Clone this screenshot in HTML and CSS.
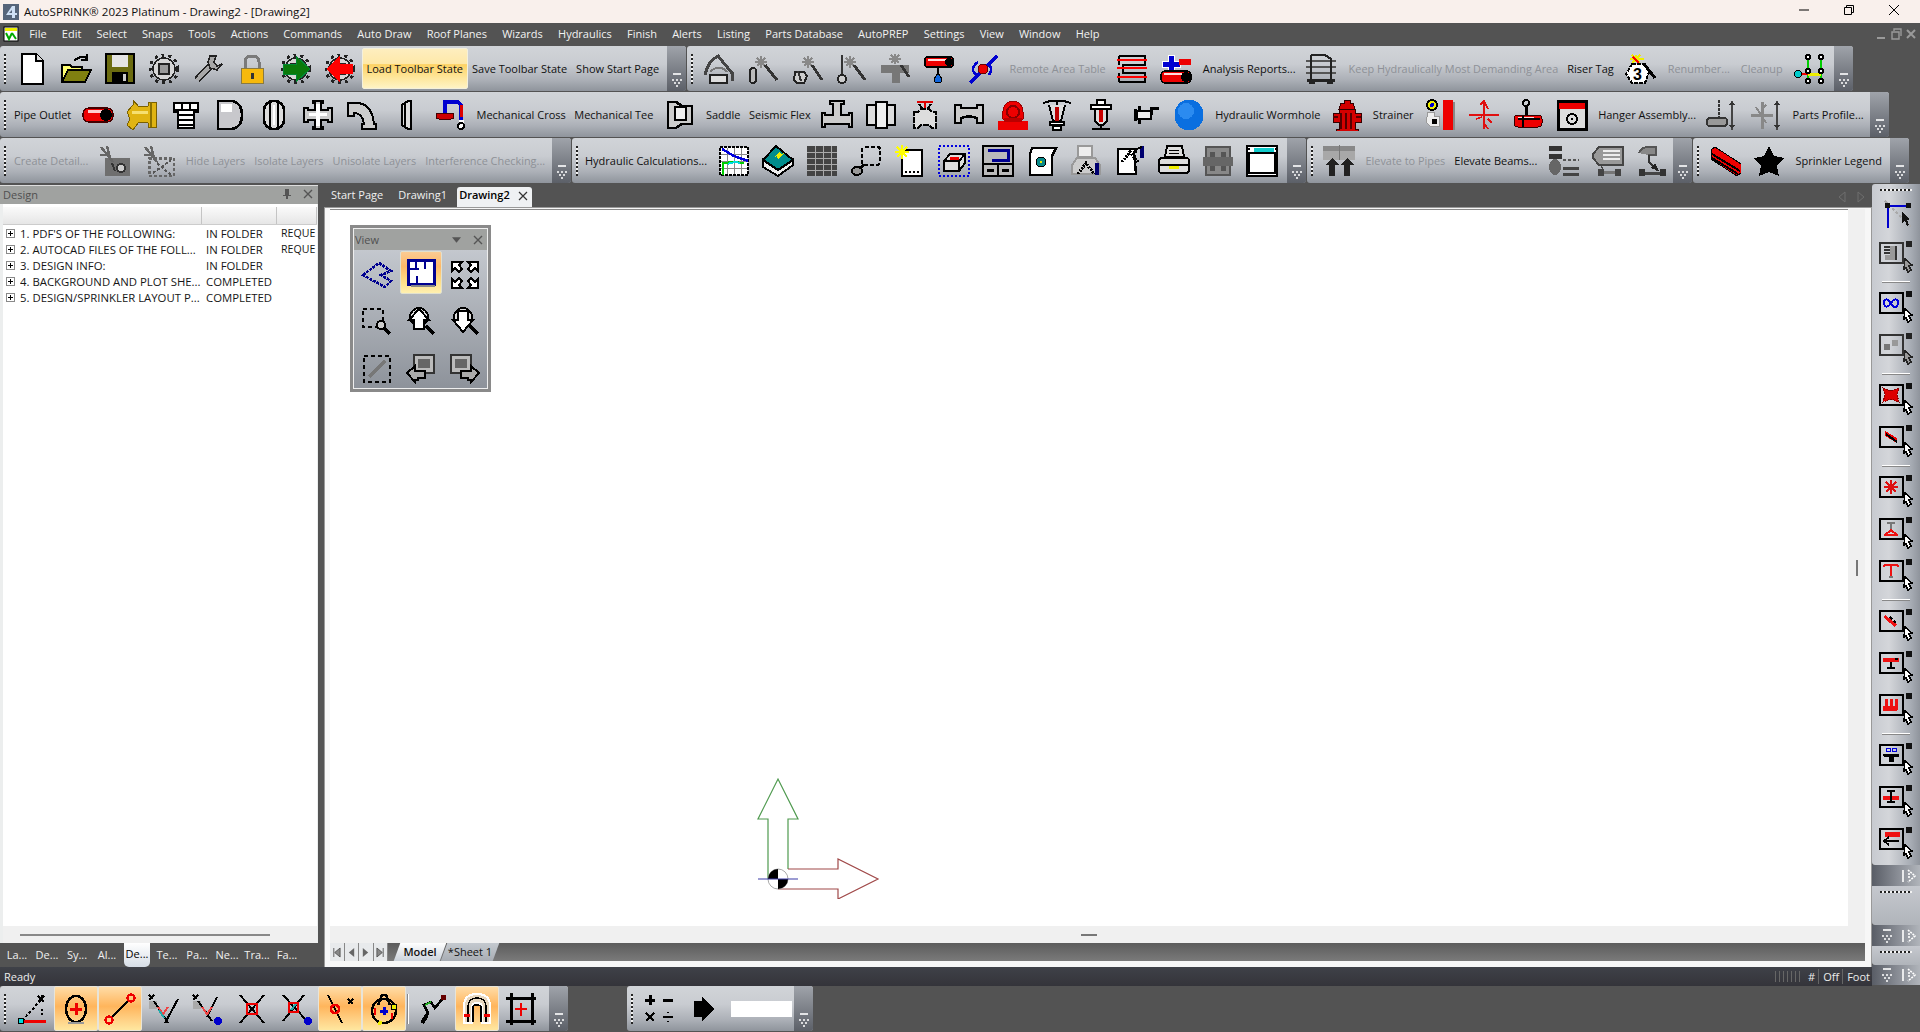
FILE: index.html
```html
<!DOCTYPE html>
<html lang="en">
<head>
<meta charset="utf-8">
<title>AutoSPRINK 2023 Platinum</title>
<link rel="stylesheet" href="styles.css">
</head>
<body>
<svg class="defs" aria-hidden="true">
<defs>
<symbol id="new" viewBox="0 0 32 32"><path d="M6 1h14l7 7v23H6z" fill="#fff" stroke="#000" stroke-width="2"/><path d="M20 1v7h7" fill="#ddd" stroke="#000" stroke-width="2"/></symbol>
<symbol id="open" viewBox="0 0 32 32"><path d="M2 28V12h8l2 2h10v14z" fill="#ffff70" stroke="#000" stroke-width="2"/><path d="M2 29l6-12h23l-6 12z" fill="#808010" stroke="#000" stroke-width="2"/><path d="M14 8q6-6 13-3M27 1v6h-6" fill="none" stroke="#000" stroke-width="2"/></symbol>
<symbol id="save" viewBox="0 0 32 32"><rect x="2" y="1" width="28" height="29" fill="#6c6c10" stroke="#000" stroke-width="2"/><rect x="8" y="2" width="16" height="12" fill="#e4e4e4"/><rect x="8" y="19" width="16" height="11" fill="#000"/><rect x="19" y="21" width="3" height="7" fill="#ccc"/></symbol>
<symbol id="gear" viewBox="0 0 32 32"><circle cx="16" cy="16" r="14" fill="none" stroke="#222" stroke-width="3" stroke-dasharray="3 4"/><circle cx="16" cy="16" r="11" fill="#d6d6d6" stroke="#222" stroke-width="1.5"/><rect x="11" y="11" width="10" height="10" fill="#9a9a9a" stroke="#222" stroke-width="2"/></symbol>
<symbol id="wrench" viewBox="0 0 32 32"><path d="M5 27L19 12" stroke="#222" stroke-width="7"/><path d="M5 27L19 12" stroke="#a8a8a8" stroke-width="4"/><path d="M18 3l-2 6 2 6 7 2 5-6-5 2-3-4 2-6z" fill="#a8a8a8" stroke="#222" stroke-width="1.5"/></symbol>
<symbol id="lock" viewBox="0 0 32 32"><path d="M9 16V9q0-6 7-6t7 6v7" fill="none" stroke="#7a7a7a" stroke-width="3"/><rect x="5" y="15" width="22" height="15" fill="#f7b90c" stroke="#8a7a40"/><rect x="15" y="20" width="3" height="6" fill="#333"/></symbol>
<symbol id="gg" viewBox="0 0 32 32"><use href="#gear" width="32" height="32"/><path d="M3 11h13V3l14 13-14 13v-8H3z" fill="#0a7a0a" stroke="#083" stroke-width="1"/></symbol>
<symbol id="gr" viewBox="0 0 32 32"><use href="#gear" width="32" height="32"/><path d="M29 11H16V3L2 16l14 13v-8h13z" fill="#f00"/></symbol>
<symbol id="hood" viewBox="0 0 32 32"><path d="M2 22Q5 8 15 3l14 17v8" fill="none" stroke="#444" stroke-width="3"/><path d="M7 19q9-9 17 0" fill="none" stroke="#777" stroke-width="2"/><rect x="7" y="22" width="17" height="8" fill="#ddd" stroke="#222" stroke-width="2.5"/></symbol>
<symbol id="sp1" viewBox="0 0 32 32"><path d="M14 3v12M8 9h12M10 5l8 8M18 5l-8 8" stroke="#888" stroke-width="2"/><path d="M18 12l12 15" stroke="#333" stroke-width="3"/><rect x="3" y="15" width="6" height="15" rx="3" fill="#bbb" stroke="#222" stroke-width="2"/></symbol>
<symbol id="sp2" viewBox="0 0 32 32"><path d="M17 3v12M11 9h12M13 5l8 8M21 5l-8 8" stroke="#888" stroke-width="2"/><path d="M21 12l10 15" stroke="#333" stroke-width="3"/><path d="M4 19h9l3 4-3 7H6l-3-3z" fill="#ccc" stroke="#222" stroke-width="2"/><path d="M7 18l3 10" stroke="#333" stroke-width="2"/></symbol>
<symbol id="sp3" viewBox="0 0 32 32"><path d="M15 3v12M9 9h12M11 5l8 8M19 5l-8 8" stroke="#888" stroke-width="2"/><path d="M19 12l11 15" stroke="#333" stroke-width="3"/><path d="M7 2v20" stroke="#333" stroke-width="2"/><circle cx="7" cy="26" r="4" fill="#ccc" stroke="#222" stroke-width="2"/></symbol>
<symbol id="sp4" viewBox="0 0 32 32"><path d="M16 1v10M10 6h12M12 2l8 8M20 2l-8 8" stroke="#888" stroke-width="2"/><path d="M2 12h28v8H21v10h-8V20H2z" fill="#777"/><path d="M22 12l8 12" stroke="#333" stroke-width="3"/></symbol>
<symbol id="rdrop" viewBox="0 0 32 32"><rect x="2" y="4" width="28" height="10" rx="3" fill="#e00" stroke="#000" stroke-width="1.5"/><rect x="5" y="6" width="20" height="2" fill="#fdd"/><circle cx="26" cy="9" r="4" fill="#000"/><path d="M15 15v6" stroke="#000" stroke-width="2"/><path d="M15 20l4 6a4 4 0 1 1-8 0z" fill="#1166dd" stroke="#000"/></symbol>
<symbol id="bluel" viewBox="0 0 32 32"><path d="M3 30L30 3" stroke="#0000d0" stroke-width="3"/><path d="M11 9a10 10 0 0 0-5 9l4 5M23 12a10 10 0 0 1-1 10" fill="none" stroke="#0000d0" stroke-width="2.5"/><circle cx="16" cy="16" r="5" fill="#e00" stroke="#600"/></symbol>
<symbol id="ztab" viewBox="0 0 32 32"><path d="M3 3h26v9H7v8h22v9H3" fill="none" stroke="#000" stroke-width="2"/><path d="M3 3v9M3 20v9" stroke="#000" stroke-width="2"/><path d="M1 7h30M1 15h30M1 24h30" stroke="#f00" stroke-width="2"/></symbol>
<symbol id="plusp" viewBox="0 0 32 32"><path d="M8 2h6v6h6v6h-6v5H8v-5H2V8h6z" fill="#0000d0" stroke="#fff"/><rect x="19" y="6" width="12" height="6" fill="#e00"/><rect x="1" y="18" width="30" height="12" rx="4" fill="#e00" stroke="#000" stroke-width="1.5"/><rect x="4" y="20" width="18" height="2" fill="#fdd"/><circle cx="26" cy="24" r="5" fill="#000"/></symbol>
<symbol id="rack" viewBox="0 0 32 32"><path d="M0 8h30M0 14h30M0 20h30" stroke="#555" stroke-width="2"/><path d="M5 2h14l6 4v22M5 2v26" fill="none" stroke="#222" stroke-width="2"/><path d="M1 27h28" stroke="#222" stroke-width="3"/><rect x="3" y="28" width="6" height="3" fill="#222"/><rect x="21" y="28" width="6" height="3" fill="#222"/></symbol>
<symbol id="tag3" viewBox="0 0 32 32"><path d="M12 2v7M6 6h14M8 2l8 8M16 2L8 10" stroke="#ee0" stroke-width="2"/><path d="M9 4l6 6" stroke="#f00" stroke-width="2"/><path d="M8 11h12l5 8-4 11H8l-6-9z" fill="#fff" stroke="#000" stroke-width="2" stroke-dasharray="4 1"/><text x="9" y="27" font-family="Liberation Sans" font-size="16" font-weight="700">3</text><path d="M20 11l11 14" stroke="#000" stroke-width="3"/></symbol>
<symbol id="netw" viewBox="0 0 32 32"><path d="M14 3v26M27 3v26" stroke="#0c0" stroke-width="2"/><path d="M14 21h13" stroke="#ee0" stroke-width="3"/><path d="M3 21h11" stroke="#e00" stroke-width="2"/><circle cx="4" cy="21" r="3.5" fill="#0cc" stroke="#000"/><g fill="#fff" stroke="#000" stroke-width="2"><circle cx="14" cy="4" r="2"/><circle cx="27" cy="4" r="2"/><circle cx="14" cy="18" r="2"/><circle cx="27" cy="18" r="2"/><circle cx="14" cy="28" r="2"/><circle cx="27" cy="28" r="2"/></g></symbol>
<symbol id="po" viewBox="0 0 32 32"><rect x="1" y="9" width="30" height="14" rx="6" fill="#e00" stroke="#400" stroke-width="1.5"/><rect x="6" y="11" width="16" height="3" fill="#fcc"/><circle cx="24" cy="16" r="6" fill="#000"/></symbol>
<symbol id="yel" viewBox="0 0 32 32"><path d="M7 1l6 7 9-1V3h8v25h-8v-4l-9-1-6 8-6-5 3-6-3-7 6-7z" fill="#e0b412" stroke="#7a6000" stroke-width="1"/><path d="M6 12h16v3H6z" fill="#f6e070"/><path d="M25 3v25" stroke="#8a7000" stroke-width="2"/></symbol>
<symbol id="plug" viewBox="0 0 32 32"><path d="M4 4h24v9h-4v16H8V13H4z" fill="#fff" stroke="#000" stroke-width="2.5"/><path d="M4 11h24M8 16h16M8 21h16M8 26h16M12 4v7M20 4v7" stroke="#000" stroke-width="2.5"/></symbol>
<symbol id="cap" viewBox="0 0 32 32"><path d="M4 2h14q10 2 10 14t-10 14H4z" fill="#c8c8cc" stroke="#000" stroke-width="2.5"/><path d="M7 5h11v8H7z" fill="#fff"/></symbol>
<symbol id="fln" viewBox="0 0 32 32"><rect x="6" y="2" width="20" height="28" rx="9" fill="#ddd" stroke="#000" stroke-width="2.5"/><path d="M12 3v26M20 3v26" stroke="#000" stroke-width="2"/><path d="M15 6h2v20h-2z" fill="#fff"/></symbol>
<symbol id="crs" viewBox="0 0 32 32"><path d="M11 2h10v2h-2v7h7V9h4v14h-4v-2h-7v7h2v2H11v-2h2v-7H6v2H2V9h4v2h7V4h-2z" fill="#ccc" stroke="#000" stroke-width="2"/><path d="M14 5h4v22h-4zM7 14h18v3H7z" fill="#fff"/></symbol>
<symbol id="elb" viewBox="0 0 32 32"><path d="M2 4h8q16 0 18 21h2v5H16v-5h2q-1-9-8-11H8v3H2z" fill="#ccc" stroke="#000" stroke-width="2"/></symbol>
<symbol id="cpl" viewBox="0 0 32 32"><path d="M12 6l6-4h3v28h-3l-6-4z" fill="#ddd" stroke="#000" stroke-width="2"/><path d="M15 5v22" stroke="#000" stroke-width="2"/></symbol>
<symbol id="uh" viewBox="0 0 32 32"><path d="M11 16V3h13l3 3v16" fill="none" stroke="#0000d0" stroke-width="4"/><path d="M27 6v12" stroke="#d00" stroke-width="3"/><rect x="2" y="14" width="18" height="6" rx="3" fill="#c00" stroke="#400"/><rect x="25" y="21" width="5" height="3" fill="#fff"/><circle cx="27" cy="27" r="3" fill="#fff" stroke="#000" stroke-width="2"/></symbol>
<symbol id="sad" viewBox="0 0 32 32"><path d="M4 3h8l6 4h10v18H18l-6 4H4z" fill="#ccc" stroke="#000" stroke-width="2.5"/><path d="M11 8h11v13H11z" fill="#eee" stroke="#000" stroke-width="2"/></symbol>
<symbol id="tee" viewBox="0 0 32 32"><path d="M9 2h14v3h-3v11h8v-2h3v14h-3v-3H4v3H1V14h3v2h8V5H9z" fill="#ccc" stroke="#000" stroke-width="2"/></symbol>
<symbol id="ucpl" viewBox="0 0 32 32"><rect x="2" y="6" width="28" height="20" fill="#ddd" stroke="#000" stroke-width="2.5"/><rect x="11" y="3" width="11" height="26" fill="#eee" stroke="#000" stroke-width="2.5"/></symbol>
<symbol id="vlv" viewBox="0 0 32 32"><path d="M8 3h16M16 3v8" stroke="#d00" stroke-width="2"/><path d="M10 5l3 4M22 5l-3 4" stroke="#000" stroke-width="2"/><path d="M5 13h4l3-3h8l3 3h4v16h-4l-3-3h-8l-3 3H5z" fill="#ddd" stroke="#000" stroke-width="2" stroke-dasharray="6 1"/></symbol>
<symbol id="red2" viewBox="0 0 32 32"><path d="M2 6h6v3h16V6h6v18h-6v-5q-8-3-16 0v5H2z" fill="#ccc" stroke="#000" stroke-width="2.5"/></symbol>
<symbol id="fdc" viewBox="0 0 32 32"><path d="M6 20Q4 3 16 2q12 1 10 18z" fill="#e00" stroke="#900"/><circle cx="16" cy="13" r="6" fill="none" stroke="#800" stroke-width="2"/><path d="M1 22h30v9H1z" fill="#e00"/><path d="M7 19h18v4H7z" fill="#b00"/></symbol>
<symbol id="ph" viewBox="0 0 32 32"><path d="M2 4q14-5 28 0M16 2v4" fill="none" stroke="#000" stroke-width="2"/><path d="M8 6l4 16h8l4-16" fill="#ddd" stroke="#000" stroke-width="2"/><rect x="14" y="8" width="4" height="14" fill="#b00"/><rect x="9" y="23" width="14" height="3" fill="#fff" stroke="#000" stroke-width="2"/><rect x="12" y="27" width="8" height="4" fill="#fff" stroke="#000" stroke-width="2"/></symbol>
<symbol id="up" viewBox="0 0 32 32"><rect x="12" y="1" width="8" height="5" fill="#fff" stroke="#000" stroke-width="2"/><rect x="6" y="6" width="20" height="4" fill="#fff" stroke="#000" stroke-width="2"/><path d="M10 10h12v12l-4 4h-4l-4-4z" fill="#ddd" stroke="#000" stroke-width="2"/><rect x="14" y="11" width="4" height="12" fill="#c00"/><path d="M16 26v3M7 30h18" stroke="#000" stroke-width="2.5"/></symbol>
<symbol id="sw" viewBox="0 0 32 32"><path d="M10 7v18M6 10v12" stroke="#000" stroke-width="3"/><path d="M8 12h14v8H8z" fill="#eee" stroke="#000" stroke-width="2"/><path d="M22 16V9h8" fill="none" stroke="#000" stroke-width="3"/></symbol>
<symbol id="ball" viewBox="0 0 32 32"><ellipse cx="16" cy="16" rx="14.5" ry="15.5" fill="#0a6fe0"/><ellipse cx="13" cy="12" rx="8" ry="8" fill="#2b8bf0"/></symbol>
<symbol id="hyd" viewBox="0 0 32 32"><path d="M13 1h6v3h3l2 6h-16l2-6h3zM8 10h16v4h6v9h-6v7h3v2H5v-2h3v-7H2v-9h6z" fill="#d40000" stroke="#300"/><path d="M10 14v16M15 14v16M20 14v16M2 18h5M25 18h5" stroke="#500" stroke-width="1.5"/></symbol>
<symbol id="strn" viewBox="0 0 32 32"><rect x="19" y="1" width="10" height="30" fill="#e00"/><rect x="29" y="3" width="2" height="28" fill="#888"/><circle cx="8" cy="6" r="5" fill="#ee0" stroke="#000" stroke-width="2"/><circle cx="8" cy="6" r="2" fill="#00c"/><path d="M4 13h6v4h5v10H6l-4-4z" fill="#eee" stroke="#999"/><rect x="8" y="20" width="5" height="5" fill="#000"/></symbol>
<symbol id="rx" viewBox="0 0 32 32"><path d="M1 16h30M16 2v28" stroke="#e01010" stroke-width="2"/><path d="M12 6l4-4 4 8M20 20l4 4M8 20l6-2M16 24l4 6" stroke="#e01010" stroke-width="1.5" fill="none"/></symbol>
<symbol id="hng" viewBox="0 0 32 32"><circle cx="14" cy="4" r="3" fill="none" stroke="#000" stroke-width="2"/><path d="M14 7v22" stroke="#000" stroke-width="3"/><rect x="2" y="16" width="28" height="12" rx="4" fill="#e00" stroke="#300"/><rect x="6" y="18" width="16" height="2" fill="#fdd"/><path d="M6 20h22M11 17v11" stroke="#000" stroke-width="2"/></symbol>
<symbol id="box" viewBox="0 0 32 32"><rect x="2" y="2" width="28" height="28" fill="#ddd" stroke="#000" stroke-width="3"/><rect x="3" y="4" width="26" height="6" fill="#e00"/><circle cx="16" cy="20" r="5" fill="none" stroke="#000" stroke-width="2"/><circle cx="16" cy="20" r="1.5"/></symbol>
<symbol id="hg1" viewBox="0 0 32 32"><path d="M13 1v17" stroke="#333" stroke-width="2" stroke-dasharray="3 1"/><rect x="1" y="19" width="20" height="8" rx="3" fill="#999" stroke="#333" stroke-width="2"/><path d="M26 2v29" stroke="#444" stroke-width="2.5"/><path d="M23 6l3-4 3 4zM23 26l3 4 3-4z" fill="#333"/></symbol>
<symbol id="hg2" viewBox="0 0 32 32"><path d="M1 16h22M12 3v27" stroke="#888" stroke-width="3"/><path d="M6 8l10 16M16 6l-4 4" stroke="#888" stroke-width="2"/><path d="M27 2v29" stroke="#444" stroke-width="2.5"/><path d="M24 6l3-4 3 4zM24 26l3 4 3-4z" fill="#333"/></symbol>
<symbol id="dt1" viewBox="0 0 32 32"><rect x="6" y="13" width="25" height="18" fill="#6f6f6f"/><path d="M2 2l12 15M1 10h10M8 1l3 12" stroke="#666" stroke-width="2.5"/><circle cx="22" cy="23" r="4" fill="#ccc" stroke="#333" stroke-width="2"/><path d="M13 18l3 8" stroke="#333" stroke-width="2"/></symbol>
<symbol id="dt2" viewBox="0 0 32 32"><rect x="6" y="13" width="25" height="18" fill="none" stroke="#666" stroke-width="3" stroke-dasharray="3 2"/><path d="M2 2l12 15M1 10h10M8 1l3 12" stroke="#666" stroke-width="2.5"/><path d="M10 28l18-13M14 18l14 12" stroke="#555" stroke-width="2" stroke-dasharray="3 2"/></symbol>
<symbol id="gph" viewBox="0 0 32 32"><rect x="2" y="2" width="28" height="28" fill="#fff" stroke="#000" stroke-width="2" stroke-dasharray="3 1"/><path d="M9 3v26M16 3v26M23 3v26M3 9h26M3 16h26M3 23h26" stroke="#888"/><path d="M4 4l12 7 14 5" fill="none" stroke="#00d" stroke-width="2.5"/><path d="M5 30V18l11-1 10 1" fill="none" stroke="#0c0" stroke-width="2"/><path d="M10 19q6-3 12-1" fill="none" stroke="#0dd" stroke-width="2"/></symbol>
<symbol id="book" viewBox="0 0 32 32"><path d="M1 15v7l15 9 15-11v-5L16 25z" fill="#eee" stroke="#000" stroke-width="2"/><path d="M1 15L14 1l17 14-15 10z" fill="#008d8d" stroke="#000" stroke-width="2"/><path d="M12 12l6-6 1 3 3-1-6 6-1-3z" fill="#ee0"/></symbol>
<symbol id="tbl" viewBox="0 0 32 32"><rect x="1" y="1" width="30" height="30" fill="#444"/><path d="M9 1v30M17 1v30M25 1v30M1 7h30M1 13h30M1 19h30M1 25h30" stroke="#aaa" stroke-width="1"/></symbol>
<symbol id="lens" viewBox="0 0 32 32"><rect x="12" y="2" width="18" height="18" rx="3" fill="none" stroke="#000" stroke-width="2.5" stroke-dasharray="4 2"/><path d="M14 20l-5 4" stroke="#000" stroke-width="3"/><ellipse cx="7" cy="26" rx="5" ry="4" fill="#999" stroke="#000" stroke-width="2"/></symbol>
<symbol id="spk" viewBox="0 0 32 32"><rect x="8" y="5" width="20" height="26" fill="#fff" stroke="#000" stroke-width="2.5"/><path d="M11 27h14" stroke="#000" stroke-dasharray="2 2" stroke-width="2"/><path d="M8 0v14M1 7h14M3 2l10 10M13 2L3 12" stroke="#ff0" stroke-width="2"/></symbol>
<symbol id="cube" viewBox="0 0 32 32"><rect x="1" y="1" width="30" height="30" fill="none" stroke="#0000e0" stroke-width="2" stroke-dasharray="2 2"/><path d="M6 16l6-7h15v9l-6 8H6z" fill="#ddd" stroke="#000" stroke-width="2"/><path d="M6 16h15v10M21 16l6-7" fill="none" stroke="#000" stroke-width="2"/><path d="M12 12h9v3h-9z" fill="#e00"/></symbol>
<symbol id="panel" viewBox="0 0 32 32"><rect x="1" y="1" width="30" height="30" fill="#bbb" stroke="#000" stroke-width="2"/><path d="M6 5h20v10H10" fill="none" stroke="#000090" stroke-width="3"/><path d="M1 19h30M16 19v12" stroke="#000" stroke-width="2"/><path d="M5 24h7v3H5zM20 24h7v3h-7z" fill="#000"/></symbol>
<symbol id="note" viewBox="0 0 32 32"><path d="M6 3h24l-4 8v19H4V9z" fill="#fff" stroke="#000" stroke-width="2.5"/><circle cx="15" cy="17" r="5" fill="#0a8a8a" stroke="#000"/><circle cx="15" cy="17" r="1.5" fill="#ee0"/></symbol>
<symbol id="prt1" viewBox="0 0 32 32"><rect x="8" y="1" width="14" height="11" fill="#eee" stroke="#999" stroke-width="2"/><path d="M2 20l5-7h18l5 7v9H2z" fill="#ccc" stroke="#999" stroke-width="2"/><path d="M8 29l8-11 8 11" fill="none" stroke="#000" stroke-width="3" stroke-dasharray="2 1"/><path d="M27 18v12" stroke="#000070" stroke-width="4"/></symbol>
<symbol id="prt2" viewBox="0 0 32 32"><path d="M4 4h18v3h-2l2 22H4z" fill="#fff" stroke="#000" stroke-width="2.5"/><path d="M8 17l8-10 8 10" fill="none" stroke="#000" stroke-width="3" stroke-dasharray="2 1"/><path d="M28 1v12" stroke="#000070" stroke-width="4"/><path d="M20 5l8-3" stroke="#000" stroke-width="2"/></symbol>
<symbol id="prt3" viewBox="0 0 32 32"><path d="M9 1h15l2 11H7z" fill="#ddd" stroke="#000" stroke-width="2"/><path d="M11 5h10M11 8h10" stroke="#000"/><rect x="1" y="13" width="30" height="15" rx="3" fill="#ddd" stroke="#000" stroke-width="2"/><path d="M1 20h30" stroke="#000" stroke-width="2"/><rect x="11" y="21" width="10" height="3" fill="#ee0"/></symbol>
<symbol id="film" viewBox="0 0 32 32"><rect x="4" y="2" width="24" height="28" fill="#888" stroke="#555" stroke-width="2"/><rect x="1" y="12" width="30" height="9" fill="#666"/><path d="M8 7h5v5H8zM19 7h5v5h-5zM8 21h5v5H8zM19 21h5v5h-5z" fill="#555"/></symbol>
<symbol id="win" viewBox="0 0 32 32"><rect x="1" y="1" width="30" height="30" fill="#fff" stroke="#000" stroke-width="2"/><rect x="8" y="3" width="20" height="5" fill="#1cc"/><rect x="3" y="8" width="26" height="20" fill="#fff" stroke="#000" stroke-width="2"/><path d="M2 3v26M30 3v26" stroke="#000" stroke-width="3" stroke-dasharray="2 2"/></symbol>
<symbol id="elev" viewBox="0 0 32 32"><rect x="0" y="6" width="32" height="9" fill="#a8a8a8"/><rect x="0" y="1" width="32" height="5" fill="#888"/><path d="M16 0v15" stroke="#777"/><path d="M9 13l7 7H12v11H6V20H2zM24 13l7 7h-4v11h-6V20h-4z" fill="#222"/></symbol>
<symbol id="lvl" viewBox="0 0 32 32"><rect x="1" y="1" width="13" height="5" fill="#333"/><rect x="1" y="9" width="13" height="5" fill="#333"/><ellipse cx="7" cy="22" rx="6" ry="8" fill="#666"/><path d="M15 15h16" stroke="#555" stroke-width="2" stroke-dasharray="3 2"/><path d="M15 23h16M15 29h16" stroke="#444" stroke-width="3"/></symbol>
<symbol id="tagb" viewBox="0 0 32 32"><path d="M7 2h24v18H7l-6-7v-4z" fill="#999" stroke="#444" stroke-width="2"/><path d="M11 6h17M11 10h17M11 14h17" stroke="#eee" stroke-width="2"/><path d="M9 20l2 5" stroke="#444"/><path d="M9 27h18" stroke="#777" stroke-width="3"/><rect x="6" y="24" width="6" height="7" fill="#444"/><rect x="23" y="24" width="6" height="7" fill="#444"/></symbol>
<symbol id="link" viewBox="0 0 32 32"><path d="M3 8q3-7 12-6h5v8h-8" fill="#888" stroke="#555" stroke-width="2"/><path d="M13 10v7l9 9" fill="none" stroke="#333" stroke-width="2.5"/><path d="M19 18l4 8-8-3z" fill="#222"/><path d="M6 28h22" stroke="#444" stroke-width="3"/><rect x="3" y="24" width="6" height="7" fill="#333"/><rect x="24" y="24" width="6" height="7" fill="#333"/></symbol>
<symbol id="redb" viewBox="0 0 32 32"><path d="M2 5l4-3 26 17v9l-4 3L2 14z" fill="#e00" stroke="#000"/><path d="M3 9l28 17M3 13l26 16" stroke="#000" stroke-width="2"/></symbol>
<symbol id="star" viewBox="0 0 32 32"><path d="M16 1l5 10 10 2-7 8 2 10-10-4-10 4 2-10-7-8 10-2z" fill="#000"/></symbol>
<symbol id="tri" viewBox="0 0 32 32"><path d="M26 2v6M26 16v6" stroke="#000" stroke-width="2" stroke-dasharray="2 2"/><path d="M6 28L24 8" stroke="#000" stroke-width="2" stroke-dasharray="3 2"/><path d="M6 28h24" stroke="#e00" stroke-width="3"/><circle cx="5" cy="28" r="3" fill="#0dd" stroke="#000"/><path d="M22 3l6 6M28 3l-6 6" stroke="#000" stroke-width="2"/></symbol>
<symbol id="sn1" viewBox="0 0 32 32"><ellipse cx="16" cy="16" rx="10" ry="13" fill="none" stroke="#000" stroke-width="2.5"/><path d="M16 10v12M10 16h12" stroke="#e00" stroke-width="3"/><path d="M8 30h16" stroke="#999" stroke-width="2"/></symbol>
<symbol id="sn2" viewBox="0 0 32 32"><path d="M7 25L25 7" stroke="#000" stroke-width="2.5"/><circle cx="27" cy="5" r="3.5" fill="none" stroke="#e00" stroke-width="2.5"/><circle cx="5" cy="27" r="3.5" fill="none" stroke="#e00" stroke-width="2.5"/></symbol>
<symbol id="sn3" viewBox="0 0 32 32"><path d="M1 8h8v8H1z" fill="#aaa"/><path d="M1 2l4 4M6 2L1 7" stroke="#000" stroke-width="2"/><path d="M30 6L17 30M6 8l14 22" stroke="#000" stroke-width="2"/><path d="M10 14l5 7 5-7" fill="none" stroke="#e44" stroke-width="2"/><path d="M11 17l5 8" stroke="#2aa" stroke-width="2"/></symbol>
<symbol id="sn4" viewBox="0 0 32 32"><path d="M1 8h8v8H1z" fill="#aaa"/><path d="M1 2l4 4M6 2L1 7" stroke="#000" stroke-width="2"/><path d="M25 4L15 24M6 8l14 20" stroke="#000" stroke-width="2"/><path d="M10 14l5 7 5-7" fill="none" stroke="#e44" stroke-width="2"/><circle cx="26" cy="28" r="4" fill="#00c"/></symbol>
<symbol id="xr" viewBox="0 0 32 32"><path d="M4 2l24 28M28 2L4 30" stroke="#000" stroke-width="2"/><rect x="11" y="11" width="10" height="10" fill="none" stroke="#e00" stroke-width="2.5"/></symbol>
<symbol id="xb" viewBox="0 0 32 32"><path d="M3 2l24 26M24 2L3 28" stroke="#000" stroke-width="2"/><rect x="9" y="10" width="9" height="9" fill="none" stroke="#e00" stroke-width="2.5"/><path d="M11 17l5-6" stroke="#2aa" stroke-width="2"/><circle cx="28" cy="28" r="4" fill="#00c"/></symbol>
<symbol id="perp" viewBox="0 0 32 32"><path d="M4 2l14 28" stroke="#000" stroke-width="2"/><circle cx="11" cy="16" r="4" fill="none" stroke="#e00" stroke-width="2.5"/><path d="M24 6l5 5M29 6l-5 5" stroke="#000" stroke-width="2"/></symbol>
<symbol id="sprk" viewBox="0 0 32 32"><circle cx="16" cy="18" r="12" fill="none" stroke="#000" stroke-width="2.5"/><path d="M10 12l4-10h4l4 10" fill="none" stroke="#000" stroke-width="2.5"/><path d="M16 14v8M12 18h8" stroke="#00c" stroke-width="3"/><circle cx="26" cy="14" r="3" fill="#ee0" stroke="#000"/><circle cx="12" cy="30" r="2" fill="#ee0"/><path d="M7 15v7M24 20v6" stroke="#e00" stroke-width="2"/></symbol>
<symbol id="wave" viewBox="0 0 32 32"><path d="M5 30l6-10-4-8 7-3 4 6 8-10" fill="none" stroke="#000" stroke-width="2.5"/><rect x="24" y="2" width="5" height="5" fill="#600"/><path d="M8 12l6-3" stroke="#2a2" stroke-width="2"/><path d="M5 30l5-8" stroke="#000" stroke-width="4"/></symbol>
<symbol id="mag" viewBox="0 0 32 32"><path d="M3 30V13Q3 1 16 1t13 12v17h-8V14q0-4-5-4t-5 4v16z" fill="#e8d8c0" stroke="#fff" stroke-width="2"/><path d="M7 29V14q0-9 9-9t9 9v15M12 29V14q0-2 4-2t4 2v15" fill="none" stroke="#000" stroke-width="1.6"/><path d="M3 22h6M23 22h6" stroke="#e00" stroke-width="3"/></symbol>
<symbol id="crop" viewBox="0 0 32 32"><path d="M1 5h30M1 28h30M6 0v32M27 0v32" stroke="#000" stroke-width="3"/><path d="M16 10v13M10 16h12" stroke="#e00" stroke-width="2.5"/></symbol>
<symbol id="ops" viewBox="0 0 32 32"><path d="M7 2v10M2 7h10M20 7h10" stroke="#000" stroke-width="3"/><path d="M3 20l8 8M11 20l-8 8" stroke="#000" stroke-width="2.5"/><path d="M20 24h10" stroke="#000" stroke-width="2.5"/><path d="M25 19v1M25 28v1" stroke="#000" stroke-width="2"/></symbol>
<symbol id="arrb" viewBox="0 0 32 32"><path d="M7 8h8V3l12 13-12 13v-5H7z" fill="#000"/></symbol>
<symbol id="v1" viewBox="0 0 32 32"><path d="M2 16L18 4l12 8-10 4 10 6-6 6z" fill="none" stroke="#000090" stroke-width="2.5" stroke-dasharray="3 1"/></symbol>
<symbol id="v2" viewBox="0 0 32 32"><rect x="3" y="3" width="26" height="24" fill="#fff" stroke="#000090" stroke-width="3"/><path d="M11 3v9M20 3v9M5 12h9M12 27v-8" stroke="#000090" stroke-width="2.5"/><path d="M6 29h24" stroke="#888" stroke-width="2"/></symbol>
<symbol id="v3" viewBox="0 0 32 32"><g fill="#fff" stroke="#000" stroke-width="2"><path d="M3 3h10l-3 3 3 4-3 3-4-4-3 3zM29 3H19l3 3-3 4 3 3 4-4 3 3zM3 29h10l-3-3 3-4-3-3-4 4-3-3zM29 29H19l3-3-3-4 3-3 4 4 3-3z"/></g></symbol>
<symbol id="v4" viewBox="0 0 32 32"><rect x="2" y="3" width="20" height="18" fill="none" stroke="#000" stroke-width="2" stroke-dasharray="4 3"/><circle cx="20" cy="19" r="4" fill="#ccc" stroke="#000" stroke-width="2"/><path d="M23 22l6 6" stroke="#000" stroke-width="3"/></symbol>
<symbol id="v5" viewBox="0 0 32 32"><circle cx="14" cy="11" r="9" fill="#ddd" stroke="#000" stroke-width="2"/><path d="M14 3L4 14h5v9h10v-9h5z" fill="#fff" stroke="#000" stroke-width="2"/><path d="M21 20l8 8" stroke="#000" stroke-width="3"/></symbol>
<symbol id="v6" viewBox="0 0 32 32"><circle cx="14" cy="11" r="9" fill="#ddd" stroke="#000" stroke-width="2"/><path d="M9 5h10v9h5L14 26 4 14h5z" fill="#fff" stroke="#000" stroke-width="2"/><path d="M21 20l8 8" stroke="#000" stroke-width="3"/></symbol>
<symbol id="v7" viewBox="0 0 32 32"><rect x="3" y="3" width="26" height="26" fill="none" stroke="#000" stroke-width="2" stroke-dasharray="4 3"/><path d="M8 24L24 8" stroke="#777" stroke-width="4"/></symbol>
<symbol id="v8" viewBox="0 0 32 32"><rect x="9" y="2" width="20" height="18" fill="#bbb" stroke="#333" stroke-width="2"/><rect x="13" y="6" width="12" height="9" fill="#666"/><path d="M2 20l8-7v5h10v7h-7v2h-3v2z" fill="#aaa" stroke="#000" stroke-width="2"/></symbol>
<symbol id="v9" viewBox="0 0 32 32"><rect x="2" y="2" width="20" height="18" fill="#bbb" stroke="#333" stroke-width="2"/><rect x="6" y="6" width="12" height="9" fill="#666"/><path d="M30 20l-8-7v5H12v7h7v2h3v2z" fill="#aaa" stroke="#000" stroke-width="2"/></symbol>
<symbol id="rf" viewBox="0 0 40 36"><rect x="1" y="4" width="23" height="20" fill="none" stroke="#000" stroke-width="2"/><rect x="27" y="2" width="6" height="6" fill="#111"/><path d="M26 20l7 6-3 1 2 4-3 2-2-4-2 1z" fill="#fff" stroke="#000" stroke-width="1.5"/></symbol>
<symbol id="rfd" viewBox="0 0 40 36"><rect x="1" y="4" width="23" height="20" fill="none" stroke="#333" stroke-width="2"/><rect x="27" y="2" width="6" height="6" fill="#222"/><path d="M26 20l7 6-3 1 2 4-3 2-2-4-2 1z" fill="#999" stroke="#222" stroke-width="1.5"/></symbol>
<symbol id="ch" viewBox="0 0 12 16"><path d="M2 2h8" stroke="#fff" stroke-width="1.6"/><path d="M1 8h2M5 8h2M9 8h2M3 11h2M7 11h2M5 14h2" stroke="#fff" stroke-width="1.5"/></symbol>
<symbol id="chr" viewBox="0 0 16 14"><path d="M2 1v12" stroke="#fff" stroke-width="1.6"/><path d="M7 1l7 6-7 6M8 4v6" stroke="#fff" stroke-width="1.6" fill="none" stroke-dasharray="2 1"/></symbol>
</defs>
</svg>

<header class="title">
  <svg class="appicon" viewBox="0 0 16 16"><rect width="16" height="16" fill="#56657a"/><path d="M9 2L3 11h6v3h3v-3h2V9h-2V2zM9 6v3H6z" fill="#cfe0f5"/></svg>
  <span class="title-text">AutoSPRINK® 2023 Platinum - Drawing2 - [Drawing2]</span>
  <div class="winbtns">
    <svg class="wb" viewBox="0 0 12 12"><path d="M1 6h10" stroke="#000"/></svg>
    <svg class="wb" viewBox="0 0 12 12"><path d="M1.5 3.5h7v7h-7zM3.5 3V1.5h7v7H9" fill="none" stroke="#000"/></svg>
    <svg class="wb" viewBox="0 0 12 12"><path d="M1 1l10 10M11 1L1 11" stroke="#000"/></svg>
  </div>
</header>

<nav class="menu">
  <svg class="docicon" viewBox="0 0 16 16"><rect x="1" y="1" width="14" height="14" fill="#fff" stroke="#000"/><rect x="2" y="2" width="12" height="3" fill="#ee0"/><path d="M3 7l3 6 3-6M9 7l4 6" stroke="#0a0" stroke-width="2" fill="none"/></svg>
  <span>File</span><span>Edit</span><span>Select</span><span>Snaps</span><span>Tools</span><span>Actions</span><span>Commands</span><span>Auto Draw</span><span>Roof Planes</span><span>Wizards</span><span>Hydraulics</span><span>Finish</span><span>Alerts</span><span>Listing</span><span>Parts Database</span><span>AutoPREP</span><span>Settings</span><span>View</span><span>Window</span><span>Help</span>
  <div class="mdibtns">
    <svg class="mb" viewBox="0 0 12 12"><path d="M2 10h8" stroke="#9a9a9a" stroke-width="2"/></svg>
    <svg class="mb" viewBox="0 0 12 12"><path d="M2 4h7v7H2zM4 3V1h7v7" fill="none" stroke="#9a9a9a" stroke-width="1.4"/></svg>
    <svg class="mb" viewBox="0 0 12 12"><path d="M2 2l8 8M10 2L2 10" stroke="#9a9a9a" stroke-width="2"/></svg>
  </div>
</nav>

<section class="bars">
  <div class="row">
    <div class="tb s1a"><i class="grip"></i>
      <svg class="i"><use href="#new"/></svg><svg class="i"><use href="#open"/></svg><svg class="i"><use href="#save"/></svg><svg class="i"><use href="#gear"/></svg><svg class="i"><use href="#wrench"/></svg><svg class="i"><use href="#lock"/></svg><svg class="i"><use href="#gg"/></svg><svg class="i"><use href="#gr"/></svg>
      <span class="lb hot">Load Toolbar State</span><span class="lb">Save Toolbar State</span><span class="lb">Show Start Page</span>
      <span class="chev"><svg class="chg"><use href="#ch"/></svg></span></div>
    <div class="tb s1b"><i class="grip"></i>
      <svg class="i"><use href="#hood"/></svg><svg class="i"><use href="#sp1"/></svg><svg class="i"><use href="#sp2"/></svg><svg class="i"><use href="#sp3"/></svg><svg class="i"><use href="#sp4"/></svg><svg class="i"><use href="#rdrop"/></svg><svg class="i"><use href="#bluel"/></svg>
      <span class="lb off">Remote Area Table</span>
      <svg class="i"><use href="#ztab"/></svg><svg class="i"><use href="#plusp"/></svg>
      <span class="lb">Analysis Reports...</span>
      <svg class="i"><use href="#rack"/></svg>
      <span class="lb off">Keep Hydraulically Most Demanding Area</span><span class="lb">Riser Tag</span>
      <svg class="i"><use href="#tag3"/></svg>
      <span class="lb off wide">Renumber...</span><span class="lb off wide">Cleanup</span>
      <svg class="i"><use href="#netw"/></svg>
      <span class="chev"><svg class="chg"><use href="#ch"/></svg></span></div>
  </div>
  <div class="row">
    <div class="tb s2"><i class="grip"></i>
      <span class="lb first">Pipe Outlet</span>
      <svg class="i"><use href="#po"/></svg><svg class="i"><use href="#yel"/></svg><svg class="i"><use href="#plug"/></svg><svg class="i"><use href="#cap"/></svg><svg class="i"><use href="#fln"/></svg><svg class="i"><use href="#crs"/></svg><svg class="i"><use href="#elb"/></svg><svg class="i"><use href="#cpl"/></svg><svg class="i"><use href="#uh"/></svg>
      <span class="lb">Mechanical Cross</span><span class="lb">Mechanical Tee</span>
      <svg class="i"><use href="#sad"/></svg>
      <span class="lb">Saddle</span><span class="lb">Seismic Flex</span>
      <svg class="i"><use href="#tee"/></svg><svg class="i"><use href="#ucpl"/></svg><svg class="i"><use href="#vlv"/></svg><svg class="i"><use href="#red2"/></svg><svg class="i"><use href="#fdc"/></svg><svg class="i"><use href="#ph"/></svg><svg class="i"><use href="#up"/></svg><svg class="i"><use href="#sw"/></svg><svg class="i"><use href="#ball"/></svg>
      <span class="lb">Hydraulic Wormhole</span>
      <svg class="i"><use href="#hyd"/></svg>
      <span class="lb">Strainer</span>
      <svg class="i"><use href="#strn"/></svg><svg class="i"><use href="#rx"/></svg><svg class="i"><use href="#hng"/></svg><svg class="i"><use href="#box"/></svg>
      <span class="lb">Hanger Assembly...</span>
      <svg class="i"><use href="#hg1"/></svg><svg class="i"><use href="#hg2"/></svg>
      <span class="lb">Parts Profile...</span>
      <span class="chev"><svg class="chg"><use href="#ch"/></svg></span></div>
  </div>
  <div class="row">
    <div class="tb s3a"><i class="grip"></i>
      <span class="lb off first">Create Detail...</span>
      <svg class="i"><use href="#dt1"/></svg><svg class="i"><use href="#dt2"/></svg>
      <span class="lb off">Hide Layers</span><span class="lb off">Isolate Layers</span><span class="lb off">Unisolate Layers</span><span class="lb off">Interference Checking...</span>
      <span class="chev"><svg class="chg"><use href="#ch"/></svg></span></div>
    <div class="tb s3b"><i class="grip"></i>
      <span class="lb first">Hydraulic Calculations...</span>
      <svg class="i"><use href="#gph"/></svg><svg class="i"><use href="#book"/></svg><svg class="i"><use href="#tbl"/></svg><svg class="i"><use href="#lens"/></svg><svg class="i"><use href="#spk"/></svg><svg class="i"><use href="#cube"/></svg><svg class="i"><use href="#panel"/></svg><svg class="i"><use href="#note"/></svg><svg class="i"><use href="#prt1"/></svg><svg class="i"><use href="#prt2"/></svg><svg class="i"><use href="#prt3"/></svg><svg class="i"><use href="#film"/></svg><svg class="i"><use href="#win"/></svg>
      <span class="chev"><svg class="chg"><use href="#ch"/></svg></span></div>
    <div class="tb s3c"><i class="grip"></i>
      <svg class="i"><use href="#elev"/></svg>
      <span class="lb off">Elevate to Pipes</span><span class="lb">Elevate Beams...</span>
      <svg class="i"><use href="#lvl"/></svg><svg class="i"><use href="#tagb"/></svg><svg class="i"><use href="#link"/></svg>
      <span class="chev"><svg class="chg"><use href="#ch"/></svg></span></div>
    <div class="tb s3d"><i class="grip"></i>
      <svg class="i"><use href="#redb"/></svg><svg class="i"><use href="#star"/></svg>
      <span class="lb">Sprinkler Legend</span>
      <span class="chev"><svg class="chg"><use href="#ch"/></svg></span></div>
  </div>
</section>

<main class="mid">
  <div class="midleft">
    <div class="work">
      <aside class="panel">
        <div class="ptitle"><span>Design</span>
          <svg class="pin" viewBox="0 0 10 12"><path d="M3 1h4v6h2v1H6v3H4V8H1V7h2z" fill="#555"/></svg>
          <svg class="px" viewBox="0 0 10 10"><path d="M1 1l8 8M9 1L1 9" stroke="#555" stroke-width="1.4"/></svg>
        </div>
        <div class="pbody">
          <div class="thead"><span></span><span></span><span></span></div>
          <ul class="tree">
            <li><i class="pm"></i><span>1. PDF'S OF THE FOLLOWING:</span><span>IN FOLDER</span><span>REQUE</span></li>
            <li><i class="pm"></i><span>2. AUTOCAD FILES OF THE FOLL...</span><span>IN FOLDER</span><span>REQUE</span></li>
            <li><i class="pm"></i><span>3. DESIGN INFO:</span><span>IN FOLDER</span><span></span></li>
            <li><i class="pm"></i><span>4. BACKGROUND AND PLOT SHE...</span><span>COMPLETED</span><span></span></li>
            <li><i class="pm last"></i><span>5. DESIGN/SPRINKLER LAYOUT P...</span><span>COMPLETED</span><span></span></li>
          </ul>
          <div class="pscroll"><i></i></div>
        </div>
        <div class="ptabs"><span>La...</span><span>De...</span><span>Sy...</span><span>Al...</span><span class="sel">De...</span><span>Te...</span><span>Pa...</span><span>Ne...</span><span>Tra...</span><span>Fa...</span></div>
      </aside>
      <section class="doc">
        <div class="dtabs"><span>Start Page</span><span>Drawing1</span><span class="act">Drawing2<svg class="tx" viewBox="0 0 10 10"><path d="M1 1l8 8M9 1L1 9" stroke="#333" stroke-width="1.2"/></svg></span>
          <div class="dnav"><svg viewBox="0 0 8 12"><path d="M7 1L1 6l6 5z" fill="none" stroke="#6e6e6e"/></svg><svg viewBox="0 0 8 12"><path d="M1 1l6 5-6 5z" fill="none" stroke="#6e6e6e"/></svg></div>
        </div>
        <div class="frame">
          <div class="canvas">
            <div class="float">
              <div class="ftitle"><span>View</span><svg class="fd" viewBox="0 0 10 6"><path d="M0 0h10L5 6z" fill="#555"/></svg><svg class="px" viewBox="0 0 10 10"><path d="M1 1l8 8M9 1L1 9" stroke="#555" stroke-width="1.4"/></svg></div>
              <div class="fgrid">
                <span class="fc"><svg class="fi"><use href="#v1"/></svg></span>
                <span class="fc on"><svg class="fi"><use href="#v2"/></svg></span>
                <span class="fc"><svg class="fi"><use href="#v3"/></svg></span>
                <span class="fc"><svg class="fi"><use href="#v4"/></svg></span>
                <span class="fc"><svg class="fi"><use href="#v5"/></svg></span>
                <span class="fc"><svg class="fi"><use href="#v6"/></svg></span>
                <span class="fc"><svg class="fi"><use href="#v7"/></svg></span>
                <span class="fc"><svg class="fi"><use href="#v8"/></svg></span>
                <span class="fc"><svg class="fi"><use href="#v9"/></svg></span>
              </div>
            </div>
            <svg class="axes" viewBox="0 0 130 130">
              <path d="M18 110V50H8L28 10l20 40H38v50" fill="none" stroke="#4f9a4f" stroke-width="1.2"/>
              <path d="M38 100h50V90l40 20-40 20v-10H28" fill="none" stroke="#a04848" stroke-width="1.2"/>
              <circle cx="28" cy="110" r="10" fill="#fff" stroke="#aaa"/>
              <path d="M28 110V100A10 10 0 0 0 18 110zM28 110v10a10 10 0 0 0 10-10z" fill="#000"/>
              <path d="M8 110h40" stroke="#3a3aa8" stroke-width="1.2"/>
            </svg>
          </div>
          <div class="vscroll"><i></i></div>
          <div class="hscroll"><i></i></div>
          <div class="corner"></div>
          <div class="sheets">
            <span class="nv"><svg viewBox="0 0 10 12"><path d="M2 1v10M9 1L3 6l6 5z" fill="#888" stroke="#555"/></svg></span>
            <span class="nv"><svg viewBox="0 0 10 12"><path d="M8 1L2 6l6 5z" fill="#666"/></svg></span>
            <span class="nv"><svg viewBox="0 0 10 12"><path d="M2 1l6 5-6 5z" fill="#666"/></svg></span>
            <span class="nv"><svg viewBox="0 0 10 12"><path d="M8 1v10M1 1l6 5-6 5z" fill="#888" stroke="#555"/></svg></span>
            <span class="sheet cur">Model</span><span class="sheet">*Sheet 1</span>
          </div>
        </div>
      </section>
    </div>
    <footer class="status"><span>Ready</span><div class="stat-r"><i class="ticks"></i><span class="hash">#</span><span class="st">Off</span><span class="st">Foot</span></div></footer>
  </div>
  <aside class="rail">
    <div class="rmain">
      <i class="rgrip"></i>
      <svg class="rt" viewBox="0 0 32 32"><path d="M3 1l26 26" stroke="#aaa" stroke-width="2" stroke-dasharray="3 2"/><path d="M6 28V6h20" fill="none" stroke="#00c" stroke-width="2.5"/><rect x="3" y="3" width="5" height="5" fill="#111"/><rect x="24" y="3" width="5" height="5" fill="#111"/><path d="M20 12l8 7-3 1 2 5-2 1-2-5-3 2z" fill="#111"/></svg>
      <span class="rb top"><svg class="rs"><use href="#rfd"/></svg><svg class="rin" viewBox="0 0 18 16"><path d="M2 2h8M2 5h8M2 8h8" stroke="#333" stroke-width="2"/><path d="M8 1h7v14H3v-5h5z" fill="#999"/><path d="M14 1v14" stroke="#333" stroke-width="2"/></svg></span>
      <hr class="rsep">
      <span class="rb"><svg class="rs"><use href="#rf"/></svg><svg class="rin" viewBox="0 0 18 16"><path d="M9 8Q5 3 3 5t0 6q3 2 6-3t6-3 0 6-6-3" fill="none" stroke="#00d" stroke-width="2"/></svg></span>
      <span class="rb"><svg class="rs"><use href="#rfd"/></svg><svg class="rin" viewBox="0 0 18 16"><rect x="2" y="7" width="6" height="6" fill="#777"/><rect x="10" y="3" width="6" height="6" fill="#999"/></svg></span>
      <hr class="rsep">
      <span class="rb"><svg class="rs"><use href="#rf"/></svg><svg class="rin" viewBox="0 0 18 16"><path d="M1 1l8 3 8-3-2 7 2 7-8-3-8 3 2-7z" fill="#d00" stroke="#800" stroke-dasharray="2 1"/></svg></span>
      <span class="rb"><svg class="rs"><use href="#rf"/></svg><svg class="rin" viewBox="0 0 18 16"><path d="M3 2l12 7v5L3 7z" fill="#e00"/><path d="M4 5l11 8" stroke="#000" stroke-width="2"/></svg></span>
      <hr class="rsep">
      <span class="rb"><svg class="rs"><use href="#rf"/></svg><svg class="rin" viewBox="0 0 18 16"><path d="M9 1v14M2 8h14M4 3l10 10M14 3L4 13" stroke="#d11" stroke-width="2"/></svg></span>
      <span class="rb"><svg class="rs"><use href="#rf"/></svg><svg class="rin" viewBox="0 0 18 16"><path d="M5 2h8M9 2v8" stroke="#777" stroke-width="2"/><path d="M9 9l-6 5M9 9l6 5M2 14h14" stroke="#e11" stroke-width="2"/></svg></span>
      <span class="rb"><svg class="rs"><use href="#rf"/></svg><svg class="rin" viewBox="0 0 18 16"><path d="M2 2h14M2 2v2M16 2v2M9 2v12" stroke="#e11" stroke-width="2.5"/><path d="M7 14h4" stroke="#777" stroke-width="2"/></svg></span>
      <hr class="rsep">
      <span class="rb"><svg class="rs"><use href="#rf"/></svg><svg class="rin" viewBox="0 0 18 16"><path d="M3 2l12 9-2 3L2 5z" fill="#e11"/><path d="M8 4l6 6" stroke="#000" stroke-width="2" stroke-dasharray="3 2"/></svg></span>
      <span class="rb"><svg class="rs"><use href="#rf"/></svg><svg class="rin" viewBox="0 0 18 16"><rect x="1" y="3" width="16" height="4" fill="#e11"/><path d="M9 7v6M5 13h8" stroke="#000" stroke-width="2"/><rect x="13" y="3" width="3" height="2" fill="#000"/></svg></span>
      <span class="rb"><svg class="rs"><use href="#rf"/></svg><svg class="rin" viewBox="0 0 18 16"><path d="M1 14V9h2V2h3v7h2V2h3v7h2V2h3v10l-1 2z" fill="#e11"/></svg></span>
      <hr class="rsep">
      <span class="rb"><svg class="rs"><use href="#rf"/></svg><svg class="rin" viewBox="0 0 18 16"><path d="M4 1h4v3H4zM10 1h4v3h-4z" fill="none" stroke="#00d"/><path d="M1 7h16v3h-5v5H7v-5H2z" fill="#000"/></svg></span>
      <span class="rb"><svg class="rs"><use href="#rf"/></svg><svg class="rin" viewBox="0 0 18 16"><rect x="1" y="7" width="16" height="4" fill="#e11"/><path d="M5 2h8M9 2v10M5 13h8" stroke="#000" stroke-width="2"/></svg></span>
      <span class="rb"><svg class="rs"><use href="#rf"/></svg><svg class="rin" viewBox="0 0 18 16"><rect x="3" y="1" width="15" height="5" fill="#e11"/><path d="M2 10h15M7 6l-5 4 5 4" stroke="#000" stroke-width="2" fill="none"/></svg></span>
    </div>
    <div class="rch h21"><svg class="chv"><use href="#chr"/></svg></div>
    <div class="rsub h39"><i class="rgrip"></i></div>
    <div class="rch h21 two"><svg class="chh"><use href="#ch"/></svg><svg class="chv"><use href="#chr"/></svg></div>
    <div class="rsub h19"><i class="rgrip"></i></div>
    <div class="rch h20 two"><svg class="chh"><use href="#ch"/></svg><svg class="chv"><use href="#chr"/></svg></div>
  </aside>
</main>

<section class="bottom">
  <div class="tb b1"><i class="grip"></i>
    <svg class="i"><use href="#tri"/></svg>
    <span class="bc on"><svg class="bi"><use href="#sn1"/></svg></span>
    <span class="bc on"><svg class="bi"><use href="#sn2"/></svg></span>
    <svg class="i"><use href="#sn3"/></svg><svg class="i"><use href="#sn4"/></svg><svg class="i"><use href="#xr"/></svg><svg class="i"><use href="#xb"/></svg>
    <span class="bc on"><svg class="bi"><use href="#perp"/></svg></span>
    <span class="bc on"><svg class="bi"><use href="#sprk"/></svg></span>
    <i class="vsep"></i>
    <svg class="i"><use href="#wave"/></svg>
    <span class="bc on"><svg class="bi"><use href="#mag"/></svg></span>
    <svg class="i"><use href="#crop"/></svg>
    <span class="chev"><svg class="chg"><use href="#ch"/></svg></span></div>
  <div class="tb b2"><i class="grip"></i>
    <svg class="i"><use href="#ops"/></svg><svg class="i"><use href="#arrb"/></svg><span class="field"></span>
    <span class="chev"><svg class="chg"><use href="#ch"/></svg></span></div>
</section>
</body>
</html>
```

FILE: styles.css
```css
* { box-sizing: border-box; }
html, body { margin: 0; padding: 0; }
body {
  width: 1920px; height: 1032px; overflow: hidden;
  background: #535353;
  font-family: "Open Sans", "Noto Sans", "Liberation Sans", sans-serif;
  font-size: 11px; color: #000;
}
.defs { position: absolute; width: 0; height: 0; }
i { display: block; font-style: normal; }
.i, .bi, .fi, .rs, .rin, .rt { shape-rendering: crispEdges; }

.title { height: 23px; background: #f9f0ec; display: flex; align-items: center; padding-left: 3px; }
.appicon { width: 16px; height: 16px; }
.title-text { margin-left: 5px; font-size: 11.6px; color: #111; }
.winbtns { margin-left: auto; display: flex; padding-bottom: 3px; }
.wb { width: 12px; height: 12px; margin-right: 33px; }
.winbtns .wb:last-child { margin-right: 20px; }

.menu { height: 23px; background: #535353; color: #f2f2f2; display: flex; align-items: center; gap: 15.2px; padding: 0 0 2px 3px; font-size: 11px; }
.docicon { width: 16px; height: 16px; margin-right: -5px; }
.mdibtns { margin-left: auto; display: flex; gap: 3px; margin-right: 3px; }
.mb { width: 12px; height: 12px; }

.bars { height: 138px; }
.row { display: flex; height: 46px; gap: 1px; padding-bottom: 1px; }
.tb {
  display: flex; align-items: center; height: 45px; position: relative;
  padding-right: 19px; border-radius: 3px;
  background: linear-gradient(#d1d4d8 0%, #c9ccd1 40%, #acb0b7 75%, #8f949c 100%);
}
.s1a { width: 686px; } .s1b { width: 1166px; }
.s2 { width: 1889px; }
.s3a { width: 571px; } .s3b { width: 734px; } .s3c { width: 385px; } .s3d { width: 216px; }
.grip { width: 2px; height: 30px; margin: 0 4px 0 4px; flex: none;
  background: repeating-linear-gradient(#222 0 2px, #f2f2f2 2px 4px); }
.i { width: 32px; height: 32px; margin: 0 6px; flex: none; display: block; }
.lb { padding: 0 4.5px; white-space: nowrap; flex: none; color: #101010; }
.s2 .lb { padding: 0 4.25px; }
.lb.off { color: #8e9197; font-size: 10.9px; padding: 0 4.5px; }
.lb.off.wide { padding: 0 5.5px; }
.lb.first, .s2 .lb.first { padding: 0 5px 0 4px; }
.s3b .lb.first { padding: 0 5px 0 3px; }
.lb.hot { height: 41px; line-height: 39px; padding: 0 3.5px; border: 1px solid #f4f0dc; border-radius: 2px;
  background: linear-gradient(#feeebf 0%, #fee8a8 38%, #fdd264 40%, #fee79e 75%, #fff3c4 100%); }
.chev { position: absolute; right: 0; top: 0; bottom: 0; width: 19px; border-radius: 0 3px 3px 0;
  background: linear-gradient(#9fa3aa, #5c6068); display: flex; align-items: flex-end; justify-content: center; padding-bottom: 3px; }
.chg { width: 12px; height: 16px; }

.mid { display: flex; height: 802px; }
.midleft { width: 1872px; display: flex; flex-direction: column; }
.work { height: 783px; display: flex; }

.panel { width: 318px; display: flex; flex-direction: column; }
.ptitle { height: 19px; margin-top: 1px; background: #a0a2a0; color: #505050; display: flex; align-items: center; padding: 0 5px 2px 3px; border-top: 1px solid #ddd; }
.ptitle span { flex: 1; }
.pin { width: 10px; height: 12px; margin-right: 11px; }
.px { width: 10px; height: 10px; }
.pbody { flex: 1; background: #fff; display: flex; flex-direction: column; border-left: 3px solid #eceeee; border-right: 1px solid #eceeee; }
.thead { height: 18px; margin-top: 3px; display: grid; grid-template-columns: 199px 75px 1fr; background: linear-gradient(#fafafa, #e6e6e6); border-bottom: 1px solid #ccc; }
.thead span { border-right: 1px solid #c4c4c4; }
.tree { list-style: none; margin: 0; padding: 0; flex: 1; }
.tree li { height: 16px; display: grid; grid-template-columns: 17px 182px 75px 40px; align-items: center; position: relative; white-space: nowrap; color: #161616; font-size: 11.35px; }
.tree li span { overflow: hidden; }
.tree li span:nth-child(3), .tree li span:nth-child(4) { padding-left: 4px; }
.tree li span:nth-child(4) { font-size: 10.6px; overflow: visible; }
.pm { width: 9px; height: 9px; margin-left: 3px; border: 1px solid #8a8a8a; background:
  linear-gradient(#000, #000) center / 5px 1px no-repeat,
  linear-gradient(#000, #000) center / 1px 5px no-repeat, #fff; }
.pscroll { height: 17px; background: #f0f0f0; display: flex; align-items: center; padding-left: 17px; }
.pscroll i { width: 250px; height: 2px; background: #888; }
.ptabs { height: 24px; display: flex; color: #f0f0f0; padding: 0 0 2px 2px; align-items: center; }
.ptabs span { width: 30px; text-align: center; }
.ptabs .sel { width: 26px; height: 24px; line-height: 22px; margin: 2px 2px 0; background: linear-gradient(#fff, #d6dde6); color: #000; border-radius: 0 0 5px 5px; }

.doc { flex: 1; margin-left: 6px; display: flex; flex-direction: column; }
.dtabs { height: 23px; display: flex; align-items: flex-end; color: #f0f0f0; padding-left: 7px; gap: 15px; }
.dtabs > span { height: 20px; line-height: 16px; }
.dtabs .act { width: 75px; margin-left: -5px; background: #eff1f3; color: #000; font-weight: 600; padding-left: 2px; border-radius: 3px 3px 0 0; position: relative; }
.tx { width: 10px; height: 10px; position: absolute; right: 4px; top: 4px; }
.dnav { margin-left: auto; margin-right: 7px; display: flex; gap: 11px; padding-bottom: 4px; }
.dnav svg { width: 8px; height: 12px; }
.frame { flex: 1; background: #f7f7f7; border: 1px solid #999; border-bottom: 0; padding: 1px 6px 6px 5px; display: grid; grid-template-columns: 1fr 17px; grid-template-rows: 1fr 17px 18px; }
.canvas { background: #fff; position: relative; border-top: 1px solid #888; }
.vscroll { background: #f0f0f0; display: flex; justify-content: center; align-items: center; }
.vscroll i { width: 2px; height: 16px; background: #777; }
.hscroll { background: #f0f0f0; display: flex; justify-content: flex-end; align-items: center; padding-right: 751px; }
.hscroll i { width: 16px; height: 2px; background: #777; }
.corner { background: #f0f0f0; }
.sheets { grid-column: 1 / 3; background: linear-gradient(#5c5c5c, #7a7a7a); display: flex; align-items: stretch; }
.nv { width: 14.5px; display: flex; align-items: center; justify-content: center; background: #e8eaec; border-right: 1px solid #888; }
.nv svg { width: 9px; height: 11px; }
.sheet { width: 52px; text-align: center; line-height: 17px; color: #111; position: relative; margin-left: 1px; z-index: 0; }
.sheet::before { content: ""; position: absolute; inset: 0; z-index: -1; transform: skewX(-20deg); background: linear-gradient(#c4c9cf, #a8adb4); }
.sheet.cur { margin-left: 9px; width: 46px; font-weight: 600; }
.sheet.cur::before { background: linear-gradient(#fff, #ccd3dc); }

.float { position: absolute; left: 20px; top: 15px; width: 141px; height: 167px; border: 3px solid #8a8a8a; outline: 1px solid #eee; outline-offset: -4px; padding: 1px; background: linear-gradient(#ccd0d6, #8d929a); }
.ftitle { height: 21px; margin: 0 0 1px; background: #a0a2a0; color: #505050; display: flex; align-items: center; padding: 0 4px 0 1px; }
.ftitle span { flex: 1; }
.fd { width: 9px; height: 6px; margin-right: 12px; }
.fgrid { display: grid; grid-template-columns: repeat(3, 44px); grid-auto-rows: 47px; justify-content: center; }
.fc { display: flex; align-items: center; justify-content: center; border-radius: 2px; }
.fc.on { margin: 0 1px 4px; background: linear-gradient(#fbcb93 0%, #feb868 35%, #fedc84 70%, #fff0b0 100%); border: 1px solid #e0e0d0; }
.fi { width: 32px; height: 32px; }
.axes { position: absolute; left: 420px; top: 559px; width: 130px; height: 130px; }

.status { height: 19px; display: flex; align-items: center; background: linear-gradient(#3f4148, #34343a); color: #ececec; padding-left: 4px; justify-content: space-between; }
.stat-r { display: flex; align-items: center; height: 100%; gap: 3px; padding-right: 2px; }
.ticks { width: 26px; height: 11px; background: repeating-linear-gradient(90deg, #666 0 1px, transparent 1px 4px); margin-right: 4px; }
.st { border-left: 1px solid #666; padding-left: 4px; }

.rail { width: 48px; display: flex; flex-direction: column; height: 802px; }
.rmain { height: 681px; border-radius: 3px 0 0 3px; background: linear-gradient(90deg, #c7cad0, #d4d6da 35%, #a8adb5 80%, #8f949c); display: flex; flex-direction: column; align-items: flex-start; padding-left: 7px; }
.rgrip { width: 32px; height: 2px; margin: 5px 0 0 1px; flex: none; background: repeating-linear-gradient(90deg, #222 0 2px, #f2f2f2 2px 4px); }
.rt { width: 32px; height: 32px; margin: 9px 0 0 3px; flex: none; }
.rb { position: relative; width: 40px; height: 36px; margin-top: 6px; display: block; flex: none; }
.rb.top { margin-top: 7px; }
.rs { width: 40px; height: 36px; display: block; }
.rin { position: absolute; left: 3px; top: 6px; width: 18px; height: 16px; }
.rsep { width: 28px; margin: 6px 0 0 3px; height: 1px; border: 0; background: #fff; box-shadow: 0 1px 0 #888; flex: none; }
.rsep + .rb { margin-top: 7px; }
.rch { background: linear-gradient(90deg, #595d66, #8a8e96 55%, #b0b4ba); display: flex; align-items: center; justify-content: flex-end; padding-right: 3px; }
.rch.two { justify-content: space-between; padding-left: 9px; }
.h21 { height: 21px; } .h20 { height: 20px; }
.rsub { background: linear-gradient(#c5c8ce, #b0b4ba); border-radius: 0 0 0 3px; padding-left: 7px; }
.h39 { height: 39px; } .h19 { height: 19px; }
.chv { width: 16px; height: 14px; }
.chh { width: 12px; height: 16px; }

.bottom { display: flex; height: 45px; gap: 59px; }
.b1 { width: 568px; } .b2 { width: 186px; }
.bc { width: 44px; height: 45px; display: flex; align-items: center; justify-content: center; flex: none; border-radius: 2px; }
.bc.on { background: linear-gradient(#ffdca6 0%, #ffb55c 45%, #ffd084 75%, #ffe79f 100%); border: 1px solid #e8e4d8; }
.bi { width: 32px; height: 32px; }
.vsep { width: 1px; height: 30px; background: #fff; margin: 0 2px; box-shadow: -1px 0 0 #888; }
.field { width: 61px; height: 16px; background: #fff; margin-left: 6px; }
```
